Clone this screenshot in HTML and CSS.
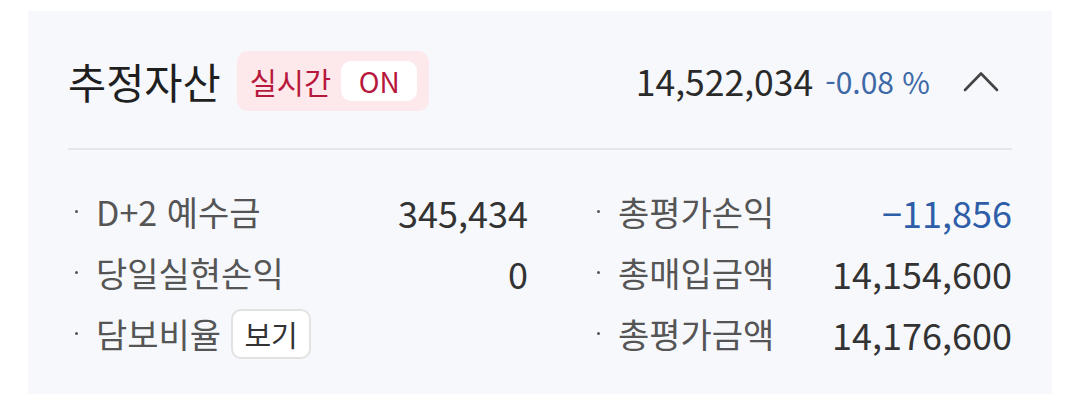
FILE: index.html
```html
<!DOCTYPE html>
<html lang="ko">
<head>
  <meta charset="UTF-8" />
  <meta name="viewport" content="width=device-width, initial-scale=1.0"/>
  <title>추정자산</title>
  <link rel="stylesheet" href="styles.css">
</head>
<body>
  <div class="card">
    <div class="head">
      <h1>추정자산</h1>
      <div class="live">
        <span class="live-label">실시간</span>
        <span class="live-on">ON</span>
      </div>
      <div class="total">
        <span class="total-num">14,522,034</span>
        <span class="total-rate">-0.08 %</span>
        <svg class="chevron" width="36" height="22" viewBox="0 0 36 22">
          <polyline points="2,20 18,3.5 34,20" fill="none" stroke="#444" stroke-width="2.6" stroke-linecap="round" stroke-linejoin="round"/>
        </svg>
      </div>
    </div>

    <div class="rows">
      <div class="row">
        <span class="label">D+2 예수금</span>
        <span class="val">345,434</span>
      </div>
      <div class="row">
        <span class="label">총평가손익</span>
        <span class="val minus">−11,856</span>
      </div>
      <div class="row">
        <span class="label">당일실현손익</span>
        <span class="val">0</span>
      </div>
      <div class="row">
        <span class="label">총매입금액</span>
        <span class="val">14,154,600</span>
      </div>
      <div class="row">
        <span class="label">담보비율<button class="view">보기</button></span>
      </div>
      <div class="row">
        <span class="label">총평가금액</span>
        <span class="val">14,176,600</span>
      </div>
    </div>
  </div>
</body>
</html>
```

FILE: styles.css
```css
body {
  margin: 0;
  background: #fff;
  font-family: 'Noto Sans CJK KR', 'Noto Sans', sans-serif;
  color: #222;
}

.card {
  margin: 11px 28px;
  height: 383px;
  box-sizing: border-box;
  padding: 0 40px;
  background: #f6f8fc;
}

.head {
  display: flex;
  align-items: center;
  height: 139px;
  padding-top: 2px;
  box-sizing: border-box;
  border-bottom: 2px solid #e4e6ea;
}

h1 {
  margin: 0;
  font-size: 41.5px;
  font-weight: 400;
  color: #1f1f1f;
}

.live {
  display: flex;
  align-items: center;
  margin-left: 16px;
  height: 60px;
  padding: 0 12px 0 13px;
  border-radius: 11px;
  background: #fde9eb;
}

.live-label {
  font-size: 29.5px;
  color: #b8173d;
}

.live-on {
  display: flex;
  align-items: center;
  justify-content: center;
  margin-left: 10px;
  width: 76px;
  height: 40px;
  border-radius: 10px;
  background: #fff;
  font-size: 28px;
  color: #b8173d;
}

.total {
  display: flex;
  align-items: center;
  margin-left: auto;
}

.total-num {
  font-size: 35.5px;
  color: #2a2a2a;
}

.total-rate {
  margin-left: 12px;
  font-size: 30px;
  color: #3d69a6;
}

.chevron {
  margin-left: 33px;
  margin-right: 13px;
}

.rows {
  display: grid;
  grid-template-columns: 460px 1fr;
  column-gap: 62px;
  padding-top: 31px;
}

.row {
  display: flex;
  align-items: center;
  justify-content: space-between;
  height: 61px;
}

.label {
  display: flex;
  align-items: center;
  font-size: 34px;
  color: #555;
  white-space: pre;
}

.label::before {
  content: '';
  width: 3px;
  height: 3px;
  margin: 0 18px 0 7px;
  border-radius: 50%;
  background: #555;
}

.val {
  font-size: 36px;
  color: #333;
}

.val.minus {
  color: #2f5ea8;
}

.view {
  margin-left: 10px;
  width: 80px;
  height: 50px;
  border: 2px solid #e2e2e2;
  border-radius: 10px;
  background: #fff;
  font-family: inherit;
  font-size: 29px;
  color: #333;
  padding: 0;
}
```
